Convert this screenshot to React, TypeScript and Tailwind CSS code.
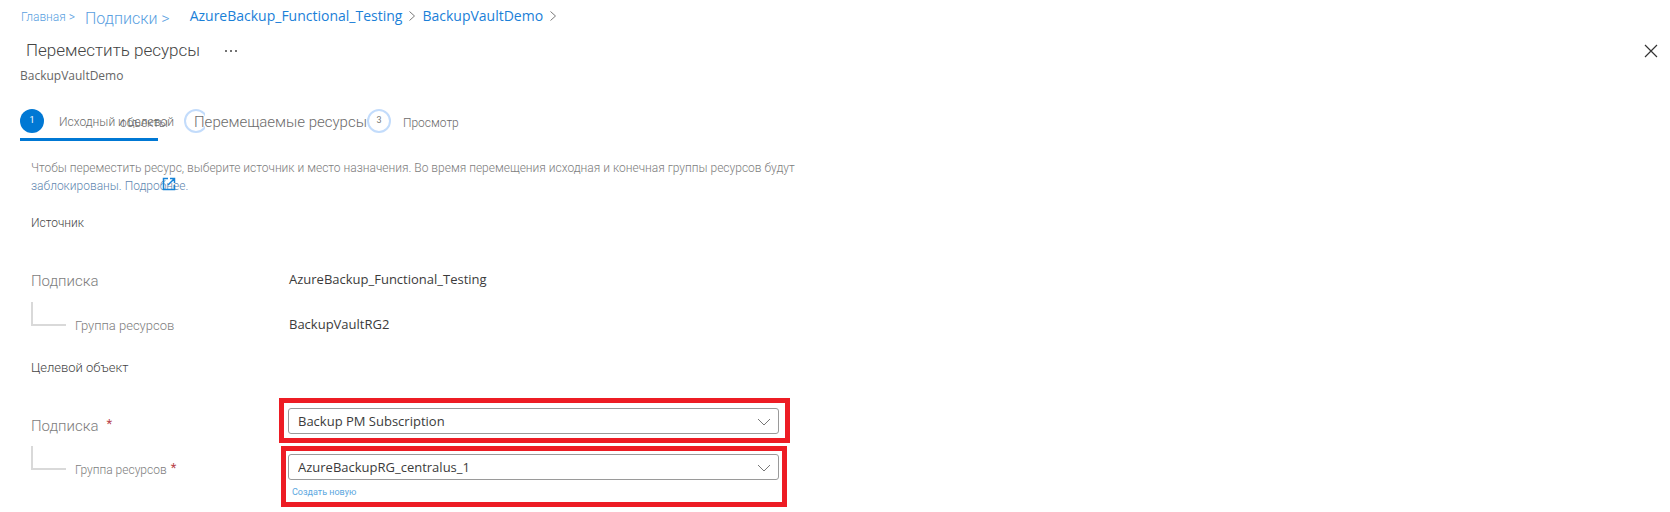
import type { ReactNode } from "react";

const latin = "font-['Open_Sans','Noto_Sans',sans-serif] font-normal";

function Chevron() {
  return (
    <svg viewBox="0 0 8 12" className="w-2 h-3 shrink-0 stroke-[#7a7a7a] fill-none">
      <path strokeWidth="1" d="M1.5 1.5L6.5 6l-5 4.5" />
    </svg>
  );
}

function Required() {
  return <span className="text-[13px] leading-5 font-normal text-[#b8444b]">*</span>;
}

function Branch() {
  return <div className="w-[35px] h-6 shrink-0 border-l-2 border-b-2 border-[#d9d9d9]" />;
}

function Dropdown({ id, value }: { id: string; value: string }) {
  return (
    <div className="relative">
      <select
        id={id}
        defaultValue={value}
        className={`${latin} block w-full h-[26px] appearance-none rounded-[3px] border border-[#9a9a9a] bg-white pl-[9px] pr-8 text-[13px] leading-5 text-[#3b3b3b]`}
      >
        <option>{value}</option>
      </select>
      <svg viewBox="0 0 14 8" className="absolute right-2 top-[10px] w-[14px] h-2 stroke-[#777] fill-none pointer-events-none">
        <path strokeWidth="1" d="M1 1l6 6 6-6" />
      </svg>
    </div>
  );
}

function StepCircle({ active, children }: { active?: boolean; children?: ReactNode }) {
  return active ? (
    <span className="flex items-center justify-center w-6 h-6 shrink-0 rounded-full bg-[#0078d4] text-[9px] font-normal text-white">{children}</span>
  ) : (
    <span className="flex items-center justify-center w-6 h-6 shrink-0 rounded-full border-2 border-[#c3dcfb] text-[9px] font-normal text-[#777]">{children}</span>
  );
}

export default function App() {
  return (
    <div className="min-h-screen bg-white pl-5 pr-3 pb-1 font-['Roboto','Liberation_Sans',sans-serif] font-light text-[12px] text-[#6b6b6b]">
      <nav className="flex items-center h-[34px] text-[#5a9fdf]">
        <a href="#home" className="pl-px text-[12px]">Главная &gt;</a>
        <a href="#subscriptions" className="ml-2.5 pt-1 text-[16px]">Подписки &gt;</a>
        <div className={`${latin} flex items-center gap-1.5 ml-5 pb-0.5 text-[14px] leading-4 text-[#1a80d8]`}>
          <a href="#group">AzureBackup_Functional_Testing</a>
          <Chevron />
          <a href="#vault">BackupVaultDemo</a>
          <Chevron />
        </div>
      </nav>

      <header>
        <div className="flex items-center h-[34px] pl-1.5">
          <h1 className="text-[17px] font-light text-[#444]">Переместить ресурсы</h1>
          <button aria-label="Ещё" className="ml-6">
            <svg viewBox="0 0 14 4" className="w-[14px] h-1 fill-[#444]">
              <circle cx="2" cy="2" r="1" />
              <circle cx="7" cy="2" r="1" />
              <circle cx="12" cy="2" r="1" />
            </svg>
          </button>
          <button aria-label="Закрыть" className="ml-auto">
            <svg viewBox="0 0 14 14" className="w-[14px] h-[14px] stroke-[#333] fill-none">
              <path strokeWidth="1.2" d="M1 1l12 12M13 1L1 13" />
            </svg>
          </button>
        </div>
        <p className={`${latin} text-[12px] leading-4 text-[#666]`}>BackupVaultDemo</p>
      </header>

      <div className="flex items-start mt-6">
        <button className="relative flex items-center w-[138px] h-[33px] pb-1 border-b-[3px] border-[#0078d4] text-left">
          <StepCircle active>1</StepCircle>
          <span className="ml-[15px] pt-0.5 whitespace-nowrap">Исходный и целевой</span>
          <span className="absolute left-[100px] top-1.5">объекты</span>
        </button>
        <button className="flex items-center h-[26px] ml-[26px]">
          <span className="w-[21px] overflow-hidden">
            <StepCircle />
          </span>
          <span className="-ml-3 pl-px pt-0.5 text-[15px] whitespace-nowrap">Перемещаемые ресурсы</span>
        </button>
        <button className="flex items-center h-[26px]">
          <StepCircle>3</StepCircle>
          <span className="ml-3 pt-1">Просмотр</span>
        </button>
      </div>

      <div className="pl-[11px]">
        <p className="mt-[18px] max-w-[800px] leading-[18px] text-[#7d7d7d]">
          Чтобы переместить ресурс, выберите источник и место назначения. Во время перемещения исходная и конечная группы ресурсов будут{" "}
          <a href="#more" className="relative inline-block text-[#5f87b0]">
            заблокированы. Подробнее.
            <svg viewBox="0 0 14 14" className="absolute right-3 top-0 w-[14px] h-[14px] stroke-[#1683d8] fill-none">
              <path strokeWidth="1.5" d="M6 1.5H1.5v11h11V8M8 1.5h4.5V6M12.5 1.5L6 8" />
            </svg>
          </a>
        </p>

        <section>
          <h2 className="mt-[19px] leading-[18px] font-light text-[#444]">Источник</h2>
          <dl className="mt-[25px] text-[#7d7d7d]">
            <div className="grid grid-cols-[258px_1fr] h-[45px]">
              <dt className="pt-3 text-[15px] leading-6">Подписка</dt>
              <dd className={`${latin} pt-2.5 text-[13px] leading-6 text-[#3b3b3b]`}>AzureBackup_Functional_Testing</dd>
            </div>
            <div className="grid grid-cols-[258px_1fr] h-[45px]">
              <dt className="flex items-start gap-[9px]">
                <Branch />
                <span className="pt-3 text-[13px] leading-6">Группа ресурсов</span>
              </dt>
              <dd className={`${latin} pt-2.5 text-[13px] leading-6 text-[#3b3b3b]`}>BackupVaultRG2</dd>
            </div>
          </dl>
        </section>

        <section className="max-w-[759px]">
          <h2 className="mt-3 text-[13px] leading-[18px] font-light text-[#444]">Целевой объект</h2>
          <div className="grid grid-cols-[248px_1fr] mt-[21px] text-[#7d7d7d]">
            <label htmlFor="subscription" className="flex items-start gap-2 pt-4 text-[15px] leading-6">
              Подписка <Required />
            </label>
            <div className="border-[5px] border-[#ed1c24] pl-1 pr-1.5 pt-[5px] pb-1">
              <Dropdown id="subscription" value="Backup PM Subscription" />
            </div>
          </div>
          <div className="grid grid-cols-[248px_1fr] mt-[3px] text-[#7d7d7d]">
            <div className="flex items-start gap-[9px]">
              <Branch />
              <label htmlFor="group" className="flex items-start gap-1 pt-3 leading-6">
                Группа ресурсов <Required />
              </label>
            </div>
            <div className="ml-0.5 mr-[3px] border-[5px] border-[#ed1c24] pl-0.5 pr-[3px] pt-[3px] pb-px">
              <Dropdown id="group" value="AzureBackupRG_centralus_1" />
              <a href="#new" className="block pt-[3px] pl-1 text-[9px] leading-[18px] font-normal text-[#5ba7e0]">Создать новую</a>
            </div>
          </div>
        </section>
      </div>
    </div>
  );
}
